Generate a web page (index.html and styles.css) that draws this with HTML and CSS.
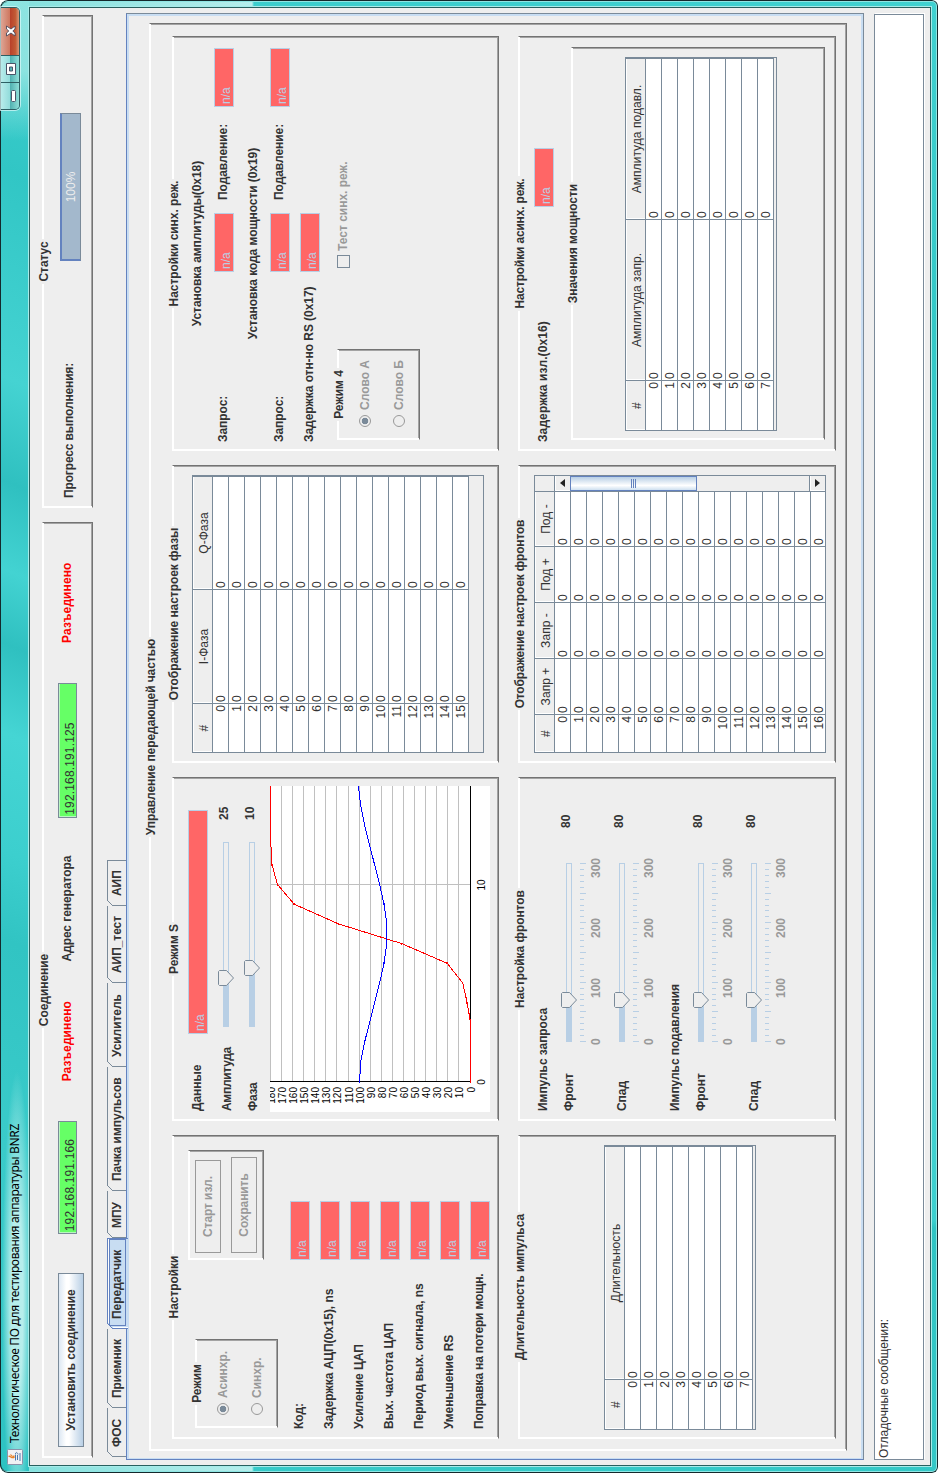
FILE: index.html
```html
<!DOCTYPE html>
<html lang="ru">
<head>
<meta charset="utf-8">
<title>Технологическое ПО для тестирования аппаратуры BNRZ</title>
<link rel="stylesheet" href="styles.css">
</head>
<body>
<div class="screen">
<div class="window">
  <header class="titlebar">
    <svg class="app-icon" width="16" height="16" viewBox="0 0 16 16">
      <rect x=".5" y=".5" width="15" height="15" rx="1" fill="#f1f1f4" stroke="#8b93ab"/>
      <path d="M8.500 1.500C10 3.500 5.500 4.500 8 7.500M10.500 3.500C8 5 8.500 5.500 9 7.500" fill="none" stroke="#e8822a" stroke-width="1.300"/>
      <path d="M4.500 8.500h6M5 10.500h5M4 13h8M11 8.500c2 0 2 2-.5 2.500" fill="none" stroke="#4a78ad"/>
    </svg>
    <span class="title-text">Технологическое ПО для тестирования аппаратуры BNRZ</span>
    <div class="win-buttons">
      <span class="wb"><svg width="12" height="14" viewBox="0 0 12 14"><rect x=".5" y="9.500" width="11" height="4" rx="1" fill="#fff" stroke="#4b5468"/></svg></span>
      <span class="wb"><svg width="12" height="14" viewBox="0 0 12 14"><path d="M.5 4.500h11v9h-11zM4 7.500v3h4v-3z" fill="#fff" fill-rule="evenodd" stroke="#4b5468"/></svg></span>
      <span class="wb wb-close"><svg width="12" height="14" viewBox="0 0 12 14"><path d="M1 4.500h3l2 2.300 2-2.300h3L8 9l3 4H8L6 10.800 4 13H1l3-4z" fill="#fff" stroke="#4b4a5c" stroke-width=".9"/></svg></span>
    </div>
  </header>

  <div class="client">
    <div class="top-row">
      <section class="group conn">
        <h2 class="legend">Соединение</h2>
        <div class="conn-body">
          <button class="connect">Установить соединение</button>
          <span class="addr addr-a">192.168.191.166</span>
          <span class="lbl off">Разъединено</span>
          <span class="lbl gen">Адрес генератора</span>
          <span class="addr addr-b">192.168.191.125</span>
          <span class="lbl off">Разъединено</span>
        </div>
      </section>
      <section class="group status">
        <h2 class="legend">Статус</h2>
        <div class="status-body">
          <span class="lbl">Прогресс выполнения:</span>
          <span class="progress">100%</span>
        </div>
      </section>
    </div>

    <nav class="tabs">
      <span class="tab t1">ФОС</span><span class="tab t2">Приемник</span><span class="tab t3 active">Передатчик</span><span class="tab t4">МПУ</span><span class="tab t5">Пачка импульсов</span><span class="tab t6">Усилитель</span><span class="tab t7">АИП_тест</span><span class="tab t8">АИП</span>
    </nav>

    <main class="pane">
      <section class="group main">
        <h2 class="legend">Управление передающей частью</h2>
        <div class="grid">

          <section class="group">
            <h3 class="legend">Настройки</h3>
            <div class="settings-top">
              <div class="group mode">
                <h4 class="legend">Режим</h4>
                <div class="radios">
                  <span class="radio"><i class="dot on"></i>Асинхр.</span>
                  <span class="radio"><i class="dot"></i>Синхр.</span>
                </div>
              </div>
              <div class="group actions">
                <button class="btn" disabled>Старт изл.</button>
                <button class="btn wide" disabled>Сохранить</button>
              </div>
            </div>
            <div class="params">
              <span class="lbl">Код:</span><span class="na">n/a</span>
              <span class="lbl">Задержка АЦП(0x15), ns</span><span class="na">n/a</span>
              <span class="lbl">Усиление ЦАП</span><span class="na">n/a</span>
              <span class="lbl">Вых. частота ЦАП</span><span class="na">n/a</span>
              <span class="lbl">Период вых. сигнала, ns</span><span class="na">n/a</span>
              <span class="lbl">Уменьшение RS</span><span class="na">n/a</span>
              <span class="lbl tight">Поправка на потери мощн.</span><span class="na">n/a</span>
            </div>
          </section>

          <section class="group">
            <h3 class="legend">Режим S</h3>
            <div class="mode-s">
              <div class="s-row"><span class="lbl">Данные</span><span class="na long">n/a</span></div>
              <div class="s-row amp"><span class="lbl low">Амплитуда</span><span class="slider" data-w="185" data-pos="49"></span><span class="val">25</span></div>
              <div class="s-row phase"><span class="lbl low">Фаза</span><span class="slider" data-w="185" data-pos="59"></span><span class="val">10</span></div>
              <svg class="chart" id="chart" width="326" height="220" viewBox="0 0 326 220"></svg>
            </div>
          </section>

          <section class="group">
            <h3 class="legend">Отображение настроек фазы</h3>
            <div class="tbl tbl-phase" data-cols="#|I-Фаза|Q-Фаза" data-widths="49|114|113" data-rows="16"></div>
          </section>

          <section class="group">
            <h3 class="legend">Настройки синх. реж.</h3>
            <div class="sync">
              <div class="lbl center">Установка амплитуды(0x18)</div>
              <div class="sync-row"><span class="lbl">Запрос:</span><span class="na">n/a</span><span class="lbl">Подавление:</span><span class="na">n/a</span></div>
              <div class="lbl center second">Установка кода мощности (0x19)</div>
              <div class="sync-row"><span class="lbl">Запрос:</span><span class="na">n/a</span><span class="lbl">Подавление:</span><span class="na">n/a</span></div>
              <div class="sync-row delay"><span class="lbl">Задержка отн-но RS (0x17)</span><span class="na">n/a</span></div>
              <div class="sync-bottom">
                <div class="group mode4">
                  <h4 class="legend">Режим 4</h4>
                  <div class="radios">
                    <span class="radio"><i class="dot on"></i>Слово А</span>
                    <span class="radio"><i class="dot"></i>Слово Б</span>
                  </div>
                </div>
                <span class="check"><i class="box"></i>Тест синх. реж.</span>
              </div>
            </div>
          </section>

          <section class="group">
            <h3 class="legend">Длительность импульса</h3>
            <div class="tbl tbl-len" data-cols="#|Длительность" data-widths="50|233" data-rows="8"></div>
          </section>

          <section class="group">
            <h3 class="legend">Настройка фронтов</h3>
            <div class="fronts">
              <div class="lbl">Импульс запроса</div>
              <div class="f-row"><span class="lbl">Фронт</span><span class="slider" data-w="179" data-pos="42" data-ticks="1"></span><span class="val">80</span></div>
              <div class="f-row next"><span class="lbl">Спад</span><span class="slider" data-w="179" data-pos="42" data-ticks="1"></span><span class="val">80</span></div>
              <div class="lbl second">Импульс подавления</div>
              <div class="f-row"><span class="lbl">Фронт</span><span class="slider" data-w="179" data-pos="42" data-ticks="1"></span><span class="val">80</span></div>
              <div class="f-row next"><span class="lbl">Спад</span><span class="slider" data-w="179" data-pos="42" data-ticks="1"></span><span class="val">80</span></div>
            </div>
          </section>

          <section class="group">
            <h3 class="legend tight">Отображение настроек фронтов</h3>
            <div class="tbl-scroll">
              <div class="tbl" data-cols="#|Запр +|Запр -|Под +|Под -" data-widths="38|56|56|56|55" data-rows="17"></div>
              <div class="scroll">
                <span class="corner"></span>
                <span class="arrow"><svg width="8" height="5"><path d="M0 5L4 0 8 5z" fill="#222"/></svg></span>
                <span class="thumb"><i></i><i></i><i></i></span>
                <span class="track"></span>
                <span class="arrow down"><svg width="8" height="5"><path d="M0 0H8L4 5z" fill="#222"/></svg></span>
              </div>
            </div>
          </section>

          <section class="group">
            <h3 class="legend tight">Настройки асинх. реж.</h3>
            <div class="async">
              <div class="async-row"><span class="lbl">Задержка изл.(0x16)</span><span class="na">n/a</span></div>
              <div class="group power">
                <h4 class="legend">Значения мощности</h4>
                <div class="tbl tbl-power" data-cols="#|Амплитуда запр.|Амплитуда подавл." data-widths="50|161|161" data-rows="8"></div>
              </div>
            </div>
          </section>

        </div>
      </section>
    </main>

    <div class="log">Отладочные сообщения:</div>
  </div>
</div>
</div>
<script src="app.js"></script>
</body>
</html>
```
FILE: styles.css
```css
* { box-sizing: border-box; }
html, body { margin: 0; background: #fff; }
body { font: 12px/18px "Liberation Sans", Arial, sans-serif; color: #333; }
h2, h3, h4 { margin: 0; font-size: 12px; }
i { font-style: normal; }

.screen { width: 938px; height: 1473px; overflow: hidden; }

/* The landscape window is turned a quarter counter-clockwise */
.window {
  width: 1473px; height: 938px;
  transform-origin: 0 0;
  transform: translateY(1473px) rotate(-90deg);
  display: flex; flex-direction: column;
  border-radius: 8px 8px 6px 6px;
  background:
    linear-gradient(90deg, #9ae5e3 0 1px, transparent 1px 1471px, #9ae5e3 1471px),
    linear-gradient(180deg, #7fdfdc 0, #b5eeec 252px, transparent 254px),
    linear-gradient(100deg, #38cbca 0%, #2fc4c3 25%, #3ccfce 25.500%, #44d4d3 40%, #30c4c4 45%, #40d1d0 55%, #33c8c7 80%, #40d1d0 100%);
  box-shadow: inset 0 0 0 1px #14292c, inset 0 0 0 2px #8fe6e4;
}

.titlebar {
  height: 29px; flex: none; margin: 0 2px;
  display: flex; align-items: flex-start;
  padding: 0 5px 0 6px;
  background:
    linear-gradient(90deg, transparent 0, transparent 1330px, rgba(160, 232, 229, .8) 1400px),
    radial-gradient(ellipse 230px 15px at 170px 16px, rgba(190, 240, 238, .95) 40%, rgba(190, 240, 238, 0) 100%),
    linear-gradient(112deg, #2dc2c2 0%, #3acbca 22%, #31c4c3 36%, #3ccfce 42%, #45d5d4 50%, #2fc0c0 56%, #43d3d2 61%, #2fc0c0 67%, #45d3d2 74%, #31c6c5 88%, #3fd1d0 100%);
  border-top: 1px solid #14292c;
  border-radius: 7px 7px 0 0;
}
.app-icon { margin-top: 6px; flex: none; }
.title-text { margin: 5px 0 0 6px; font: 12px/18px "Noto Sans", "Open Sans", sans-serif; letter-spacing: -.34px; color: #000; white-space: nowrap; }
.win-buttons { margin-left: auto; height: 19px; display: flex; border: 1px solid #2d5f63; border-top: 0; border-radius: 0 0 5px 5px; overflow: hidden; box-shadow: 0 0 0 1px rgba(220, 250, 250, .7); }
.wb { width: 27px; display: flex; align-items: center; justify-content: center; padding-bottom: 2px; border-right: 1px solid #2d5f63; background: linear-gradient(#b8eceb, #93dcdb 48%, #4fb0b0 50%, #8fdfd8); }
.wb-close { width: 47px; border-right: 0; background: linear-gradient(#dda595, #cf7860 48%, #b8402a 50%, #c25a35 80%, #d89878); }
.wb svg { flex: none; }

.client {
  flex: 1; margin: 0 7px 7px; border: 1px solid #28605f; background: #eee;
  box-shadow: 0 0 0 1px #a7ebe9;
}

/* Raised bevel box with a title sitting on its top edge */
.group {
  border: 1px solid; border-color: #fff #737373 #737373 #fff;
  box-shadow: inset 1px 1px #fff, inset -1px -1px #a3a3a3;
}
.legend {
  width: fit-content; height: 16px; line-height: 16px;
  margin: -7px auto -9px; padding: 0 2px;
  background: #eee; font-weight: bold; white-space: nowrap;
}
.lbl, .legend, .connect, .tab { letter-spacing: -.06px; }
.lbl { font-weight: bold; white-space: nowrap; line-height: 18px; }
.tight { letter-spacing: -.17px; }

.top-row { display: flex; gap: 14px; padding: 12px 0 0 7px; }
.conn { width: 936px; height: 51px; }
.status { width: 493px; height: 51px; }
.conn-body { display: flex; align-items: flex-start; padding: 15px 0 0 10px; }
.connect {
  width: 174px; height: 26px; padding: 0; border: 1px solid #7a8a99;
  font: bold 12px/25px "Liberation Sans", Arial, sans-serif; color: #333;
  background: linear-gradient(#dde8f3, #fff 30%, #fff 42%, #b8cfe5 100%);
}
.addr { height: 19px; border: 1px solid #7a8a99; background: #6f6; padding-left: 2px; line-height: 22px; letter-spacing: .15px; box-shadow: inset 1px 1px #b9f7c0; }
.addr-a { width: 113px; margin: 0 40px 0 39px; }
.addr-b { width: 135px; margin: 0 40px 0 0; }
.off { color: #f00; width: 120px; letter-spacing: .1px; }
.gen { width: 144px; }
.status-body { display: flex; align-items: flex-start; padding: 17px 0 0 9px; }
.status-body .lbl { width: 237px; letter-spacing: -.14px; }
.progress { width: 148px; height: 21px; border: 1px solid #6382bf; border-right-color: #7a8a99; border-bottom-color: #7a8a99; background: #a3b8cc; box-shadow: inset 1px 1px #6382bf; color: #eee; text-align: center; line-height: 20px; }

.tabs { display: flex; height: 19px; margin: 14px 0 0 8px; }
.tab { position: relative; z-index: 1; height: 19px; border: 1px solid #7a8a99; border-width: 1px 0 0 1px; padding-left: 9px; line-height: 19px; font-weight: bold; white-space: nowrap; }
.tab::before { content: ""; position: absolute; left: -1px; top: -1px; width: 6px; height: 6px; background: linear-gradient(135deg, #eee 42%, #7a8a99 44% 56%, #eee 58%); }
.t1 { width: 49px; } .t2 { width: 79px; } .t3 { width: 91px; } .t4 { width: 47px; }
.t5 { width: 124px; } .t6 { width: 84px; } .t7 { width: 77px; }
.t8 { width: 46px; border-right-width: 1px; }
.tab.active { height: 21px; z-index: 2; border-color: #6382bf; border-right-width: 1px; background: #c8ddf2; box-shadow: inset 1px 1px #fff; }
.tab.active::before { background: linear-gradient(135deg, #eee 42%, #6382bf 44% 56%, #c8ddf2 58%); }
.tab.active::after { content: ""; position: absolute; inset: 1px 0 2px 2px; border: 1px solid #6382bf; }

.pane {
  width: 1447px; height: 738px; margin-left: 5px; padding: 22px 0 0 8px;
  border: 1px solid; border-color: #6382bf #7a8a99 #7a8a99 #6382bf;
  box-shadow: inset 1px 2px #c8ddf2, inset -2px -2px #c8ddf2;
}
.main { width: 1428px; height: 698px; }
.grid { display: grid; grid-template-columns: 304px 344px 298px 415px; grid-template-rows: 327px 318px; gap: 19px 14px; padding: 22px 0 0 11px; }

.na { display: block; width: 59px; height: 20px; border: 1px solid #b8cfe5; background: #f66; color: #b8cfe5; padding-left: 2px; line-height: 22px; }

.settings-top { display: flex; height: 117px; padding: 15px 0 0 10px; gap: 79px; }
.mode { width: 89px; height: 83px; margin-top: 7px; }
.mode4 { width: 91px; height: 83px; }
.radios { display: flex; flex-direction: column; gap: 16px; padding: 18px 0 0 12px; }
.radio, .check { display: flex; align-items: center; gap: 5px; height: 18px; color: #999; font-weight: bold; white-space: nowrap; }
.dot { width: 12px; height: 12px; border: 1px solid #999; border-radius: 50%; }
.dot.on { background: radial-gradient(circle, #7a8a99 3px, transparent 3.600px); }
.actions { width: 110px; height: 76px; display: flex; flex-direction: column; gap: 10px; padding: 6px; }
.btn { width: 93px; height: 26px; padding: 0; border: 1px solid #999; background: #eee; color: #999; font: bold 12px/25px "Liberation Sans", Arial, sans-serif; letter-spacing: -.1px; }
.btn.wide { width: 96px; }
.params { display: grid; grid-template-columns: 169px 59px; grid-auto-rows: 20px; row-gap: 10px; padding-left: 9px; }

.mode-s { padding: 15px 0 0 8px; }
.s-row { display: flex; height: 20px; padding-left: 1px; }
.s-row .lbl { width: 77px; }
.s-row .low { line-height: 20px; letter-spacing: -.3px; }
.na.long { width: 224px; }
.amp { margin-top: 9px; }
.phase { margin-top: 6px; }
.slider { display: block; height: 20px; }
.slider svg { display: block; overflow: visible; }
.val { font-weight: bold; line-height: 14px; margin-left: 22px; }
.chart { display: block; margin-top: 7px; background: #fff; font-size: 10px; }

.tbl { border: 1px solid #7a8a99; width: 278px; height: 292px; overflow: hidden; }
.tbl table { border-collapse: separate; border-spacing: 0; table-layout: fixed; }
.tbl th, .tbl td { padding: 0; border: 0 solid #7a8a99; border-width: 0 1px 1px 0; white-space: nowrap; letter-spacing: .05px; }
.tbl th { height: 20px; line-height: 16px; padding-top: 3px; font-weight: normal; background: #eee; box-shadow: inset 1px 1px #fff; }
.tbl td { height: 16px; line-height: 13px; background: #fff; padding: 2px 0 0 1px; }
.tbl td:first-child { text-align: right; padding: 2px 1px 0 0; }
.tbl-phase { margin: 19px 0 0 9px; }
.tbl-len { margin: 85px 0 0 8px; width: 285px; height: 152px; }
.tbl-power { margin: 53px 0 0 8px; width: 374px; height: 152px; }
.tbl-scroll { display: flex; margin: 15px 0 0 9px; }
.tbl-scroll .tbl { width: 262px; border-right: 0; }
.scroll { width: 16px; height: 292px; display: flex; flex-direction: column; border: 1px solid #7a8a99; border-left: 0; }
.corner { height: 20px; border-bottom: 1px solid #7a8a99; }
.arrow { height: 15px; display: flex; align-items: center; justify-content: center; box-shadow: inset 1px 1px #fff; }
.thumb { height: 127px; border: 1px solid #6382bf; background: linear-gradient(90deg, #cfe0f0, #fff 35%, #b8cfe5); display: flex; flex-direction: column; align-items: center; justify-content: center; gap: 1px; }
.thumb i { width: 9px; height: 1px; background: #6382bf; }
.track { flex: 1; }
.arrow.down { border-top: 1px solid #7a8a99; height: 16px; }

.sync { padding-top: 15px; }
.center { text-align: center; }
.sync .second { margin-top: 10px; }
.sync-row { display: grid; grid-template-columns: 170px 59px 106px 59px; padding-left: 8px; margin-top: 8px; height: 20px; }
.sync-row .lbl:nth-child(3) { padding-left: 13px; }
.sync-row.delay { margin-top: 10px; }
.sync-bottom { display: flex; align-items: flex-start; padding: 17px 0 0 10px; gap: 81px; }
.check { margin-top: -3px; gap: 4px; }
.box { width: 13px; height: 13px; border: 1px solid #7a8a99; }

.fronts { padding: 15px 0 0 9px; }
.f-row { display: flex; height: 43px; margin-top: 8px; }
.f-row.next { margin-top: 10px; }
.f-row .lbl { width: 69px; }
.f-row .slider { height: 43px; }
.f-row .val { line-height: 12px; margin-left: 35px; }
.fronts .second { margin-top: 10px; }

.async { padding-top: 15px; }
.async-row { display: grid; grid-template-columns: 235px 59px; padding-left: 8px; height: 20px; }
.async-row .lbl { letter-spacing: .1px; }
.power { width: 393px; height: 254px; margin: 17px 0 0 10px; }

.log { width: 1446px; height: 50px; margin: 10px 0 0 5px; padding: 1px 0 0 1px; border: 1px solid #7a8a99; background: #fff; line-height: 16px; box-shadow: 1px 1px #fff; }
```
FILE: app.js
```js
// Data tables: the first column is the row index, every other cell holds 0
document.querySelectorAll('.tbl').forEach(function (box) {
  var cols = box.dataset.cols.split('|');
  var widths = box.dataset.widths.split('|').map(Number);
  var total = widths.reduce(function (a, b) { return a + b; }, 0);
  var html = '<table style="width:' + total + 'px"><colgroup>' +
    widths.map(function (w) { return '<col style="width:' + w + 'px">'; }).join('') +
    '</colgroup><tr>' + cols.map(function (c) { return '<th>' + c + '</th>'; }).join('') + '</tr>';
  for (var r = 0; r < +box.dataset.rows; r++) {
    html += '<tr>' + cols.map(function (c, i) { return '<td>' + (i ? 0 : r) + '</td>'; }).join('') + '</tr>';
  }
  box.innerHTML = html + '</table>';
});

// Sliders: filled part, hollow track, pointer thumb and an optional 0–300 scale
document.querySelectorAll('.slider').forEach(function (el) {
  var w = +el.dataset.w, p = +el.dataset.pos, s = '';
  var x0 = el.dataset.ticks ? 0 : 7;
  s += '<rect x="' + (x0 + .5) + '" y="6.5" width="' + (w - 1) + '" height="5" fill="#eee" stroke="#b8cfe5"/>';
  s += '<rect x="' + x0 + '" y="6" width="' + p + '" height="5" fill="#b8cfe5"/>';
  var t = x0 + p - 7.5;
  s += '<path d="M' + (t + 1) + ' 1.5h13l1 1v7l-7.5 7-7.5-7v-7z" fill="#eee" stroke="#7a8a99"/>';
  if (el.dataset.ticks) {
    for (var i = 0; i <= 30; i++) {
      var x = Math.round(i * 178 / 30) + .5;
      s += '<path d="M' + x + ' 20v' + (i % 5 ? 4 : 6) + '" stroke="#b8cfe5"/>';
    }
    [['0', -3], ['100', 44], ['200', 104], ['300', 164]].forEach(function (l) {
      s += '<text x="' + l[1] + '" y="40" font-weight="bold" fill="#999">' + l[0] + '</text>';
    });
  }
  el.innerHTML = '<svg width="' + (w + x0) + '" height="' + (el.dataset.ticks ? 43 : 20) + '">' + s + '</svg>';
});

// Front shape chart
(function () {
  var left = 30.5, bottom = 200.5, sx = 19.7, sy = 1.109, s = '';
  var red = [0, 0, 0, 0, 3, 7, 21, 62, 119, 159, 174, 179, 180, 180, 180, 180];
  var blue = [100, 99, 95.5, 91, 86.5, 82, 78, 75.5, 75.5, 78, 82, 86.5, 91, 95.5, 99, 101];
  for (var v = 0; v <= 180; v += 10) {
    var y = Math.round(bottom - v * sy) + .5 - 1;
    if (v) s += '<path d="M30 ' + y + 'H326" stroke="#c0c0c0"/>';
    s += '<text x="25" y="' + (y + 4) + '" text-anchor="end">' + v + '</text>';
  }
  s += '<path d="M227.5 0V200" stroke="#c0c0c0"/>';
  s += '<path d="M30.5 0V200.5H326" fill="none" stroke="#000"/>';
  s += '<text x="30" y="215" text-anchor="middle">0</text><text x="227" y="215" text-anchor="middle">10</text>';
  function line(data, color) {
    var pts = data.map(function (d, i) { return (left + i * sx).toFixed(1) + ',' + Math.max(.5, bottom - d * sy).toFixed(1); });
    s += '<g shape-rendering="crispEdges"><polyline points="' + pts.join(' ') + '" fill="none" stroke="' + color + '"/>';
    pts.slice(0, -1).forEach(function (p) {
      var c = p.split(',');
      s += '<rect x="' + (c[0] - 1) + '" y="' + (c[1] - 1) + '" width="2" height="1.5" fill="' + color + '"/>';
    });
    s += '</g>';
  }
  line(red, '#f00');
  line(blue, '#00f');
  document.getElementById('chart').innerHTML = s;
})();
```
